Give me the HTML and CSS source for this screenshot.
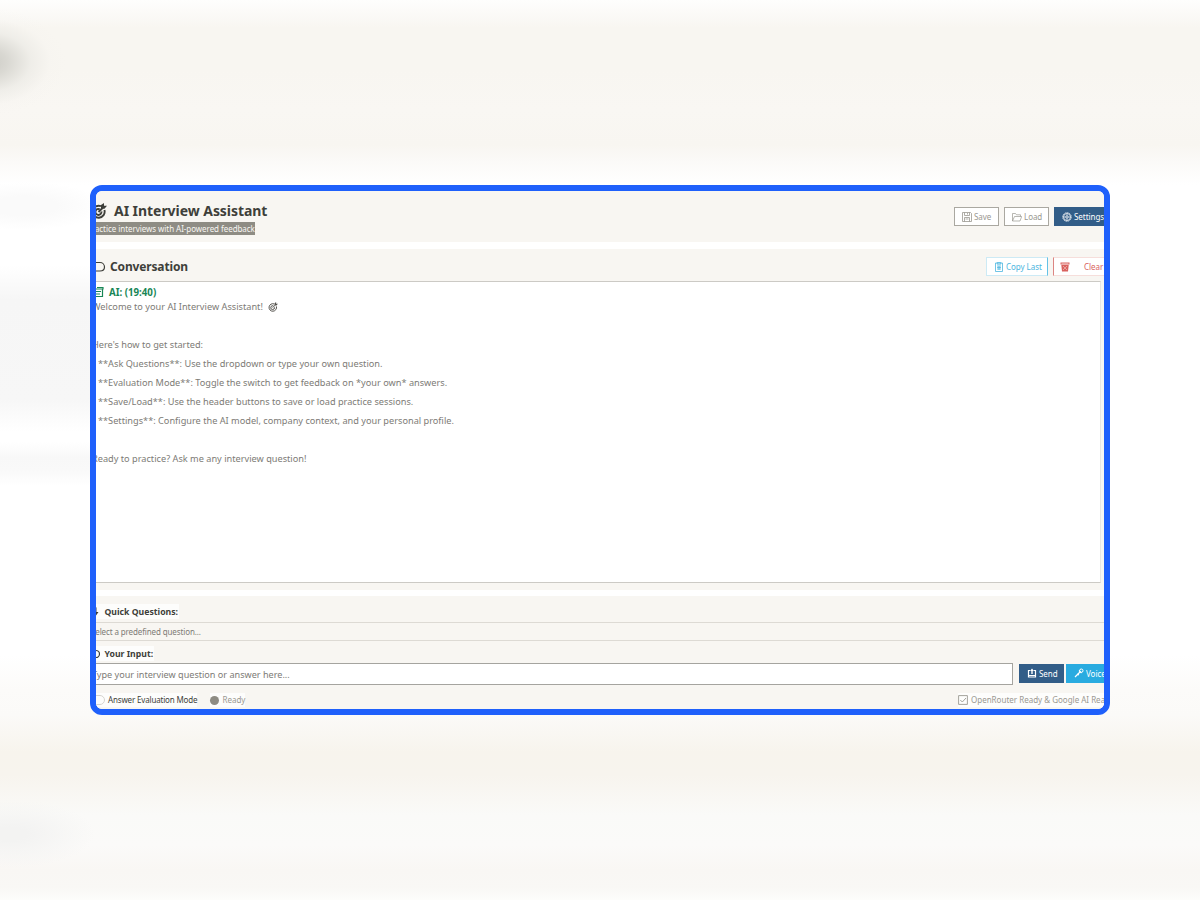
FILE: index.html
```html
<!DOCTYPE html>
<html lang="en">
<head>
    <meta charset="UTF-8">
    <meta name="viewport" content="width=device-width, initial-scale=1.0">
    <title>AI Interview Assistant</title>
    <link rel="stylesheet" href="styles.css">
</head>
<body>
    <div class="window">
        <div class="app">

            <header class="header">
                <div class="brand">
                    <h1>
                        <svg class="icon-title" viewBox="0 0 16 16"><g fill="none" stroke="currentColor" stroke-width="1.9"><path d="M10 3.200A6 6 0 1 0 13.400 7"/><path d="M8.800 6.300A3 3 0 1 0 10.400 8.500"/><path d="M7.500 9L13 3.500"/></g><path d="M10 5.500V2L13 0v2.800H16L13.500 5.800z" fill="currentColor"/></svg>
                        <span>AI Interview Assistant</span>
                    </h1>
                    <p><span class="subtitle">Practice interviews with AI-powered feedback</span></p>
                </div>
                <div class="header-buttons">
                    <button class="btn btn-save">
                        <svg viewBox="0 0 10 10"><path d="M.5.500h8l1 1v8h-9zM2.500.500v3h5v-3M2.500 9.500v-4h5v4M5.500 1v1.500M3.500 7h3" fill="none" stroke="currentColor" stroke-width=".8"/></svg>
                        <span>Save</span>
                    </button>
                    <button class="btn btn-load">
                        <svg viewBox="0 0 10 10"><path d="M.5 9V1.500h3l1 1.300h4V4.500M.5 9l2-4.500h7.200L8 9z" fill="none" stroke="currentColor" stroke-width=".7"/></svg>
                        <span>Load</span>
                    </button>
                    <button class="btn btn-settings">
                        <svg viewBox="0 0 10 10"><g fill="none" stroke="currentColor"><circle cx="5" cy="5" r="4.300" stroke-width=".7" stroke-dasharray="1.700 .5"/><circle cx="5" cy="5" r="3.500" stroke-width=".8"/><circle cx="5" cy="5" r="1.200" stroke-width=".8"/><path d="M5 1.700v2.100M5 6.200v2.100M1.700 5h2.100M6.200 5h2.100" stroke-width=".6"/></g></svg>
                        <span>Settings</span>
                    </button>
                </div>
            </header>

            <section class="conversation">
                <div class="section-head">
                    <h2>
                        <svg class="icon-bubble" viewBox="0 0 16 12"><path d="M5 1.500h5C12.500 1.500 14.500 3.500 14.500 6S12.500 10 10 10H5" fill="none" stroke="currentColor" stroke-width="1.200"/></svg>
                        <span>Conversation</span>
                    </h2>
                    <div class="section-buttons">
                        <button class="btn btn-copy">
                            <svg viewBox="0 0 10 10"><path d="M1.500 1h7v8.500h-7zM3.200.600h3.600v1.600H3.200zM3 4h4M3 5.500h4M3 7h4M5 4v4" fill="none" stroke="currentColor" stroke-width=".8"/></svg>
                            <span>Copy Last</span>
                        </button>
                        <button class="btn btn-clear">
                            <svg viewBox="0 0 10 10"><path d="M.5.500h9v2h-9zM1.300 3h7.400L8 9.500H2z" fill="currentColor"/><path d="M3 4l4 4M7 4L3 8M1.500 1.500h7" stroke="#fff" stroke-width=".4"/></svg>
                            <span>Clear</span>
                        </button>
                    </div>
                </div>
                <div class="chat">
                    <div class="sender">
                        <svg viewBox="0 0 12 10"><path d="M1 2h9.500v7.500H1zM2.500 4.500h6.500M4 7h4M5 .500h6v2" fill="none" stroke="currentColor" stroke-width="1.200"/></svg>
                        <span>AI: (19:40)</span>
                    </div>
                    <div class="line welcome">
                        <span>Welcome to your AI Interview Assistant!</span>
                        <svg viewBox="0 0 16 16"><g fill="none" stroke="currentColor" stroke-width="1.600"><path d="M10 3.200A6 6 0 1 0 13.400 7"/><path d="M8.800 6.300A3 3 0 1 0 10.400 8.500"/><path d="M7.500 9L13 3.500"/></g><path d="M10.500 5V2L13 0v2.800H16L13.500 5.500z" fill="currentColor"/></svg>
                    </div>
                    <div class="line"></div>
                    <div class="line">Here's how to get started:</div>
                    <div class="line item">**Ask Questions**: Use the dropdown or type your own question.</div>
                    <div class="line item">**Evaluation Mode**: Toggle the switch to get feedback on *your own* answers.</div>
                    <div class="line item">**Save/Load**: Use the header buttons to save or load practice sessions.</div>
                    <div class="line item">**Settings**: Configure the AI model, company context, and your personal profile.</div>
                    <div class="line"></div>
                    <div class="line">Ready to practice? Ask me any interview question!</div>
                </div>
            </section>

            <section class="composer">
                <div class="label label-quick">
                    <svg viewBox="0 0 8 10"><path d="M5.500 0L2 5.500h2.500L4 10l3.500-5H5.500z" fill="currentColor"/></svg>
                    <span>Quick Questions:</span>
                </div>
                <div class="select">Select a predefined question...</div>
                <div class="label label-input">
                    <svg viewBox="0 0 8 10"><path d="M3 1.500h2C6.800 1.500 8.500 3 8.500 5S6.800 8.500 5 8.500H3" fill="none" stroke="currentColor" stroke-width="1.200"/></svg>
                    <span>Your Input:</span>
                </div>
                <div class="input-row">
                    <div class="input">Type your interview question or answer here...</div>
                    <button class="btn btn-send">
                        <svg viewBox="0 0 10 10"><path d="M3 2.500H1.500V9h7V2.500H7M2 7.500h6" fill="none" stroke="currentColor" stroke-width="1.200"/><path d="M5 .500l2 2.500H5.700V6H4.300V3H3z" fill="currentColor"/></svg>
                        <span>Send</span>
                    </button>
                    <button class="btn btn-voice">
                        <svg viewBox="0 0 10 10"><path d="M1 9l5-5M5 2.500L7.500 5M3 6l2 1" fill="none" stroke="currentColor" stroke-width="1.200"/><circle cx="7.300" cy="2.700" r="1.700" fill="none" stroke="currentColor"/></svg>
                        <span>Voice</span>
                    </button>
                </div>
                <div class="status-row">
                    <div class="mode"><i class="toggle"></i><span>Answer Evaluation Mode</span></div>
                    <div class="ready-state"><i class="dot"></i><span>Ready</span></div>
                    <div class="api-state">
                        <svg viewBox="0 0 10 10"><path d="M.600.600h8.800v8.800H.600zM2.300 5l2 2L8 3" fill="none" stroke="currentColor" stroke-width=".9"/></svg>
                        <span>OpenRouter Ready &amp; Google AI Ready</span>
                    </div>
                </div>
            </section>

        </div>
    </div>
</body>
</html>
```
FILE: styles.css
```css
body {
    margin: 0;
    height: 900px;
    overflow: hidden;
    box-sizing: border-box;
    padding: 185px 90px;
    font-family: "Noto Sans", "Open Sans", sans-serif;
    color: #7d7b76;
    background:
        radial-gradient(ellipse 78px 54px at -12px 62px, #cccbc5 0%, rgba(212, 211, 205, .85) 25%, rgba(230, 229, 224, .5) 55%, rgba(244, 242, 238, .2) 80%, transparent 100%),
        radial-gradient(ellipse 80px 24px at 25px 206px, #fafafa 40%, transparent 100%),
        linear-gradient(transparent 265px, #f6f6f6 300px, #f7f7f7 400px, transparent 432px) 0 0 / 92px 900px no-repeat,
        linear-gradient(transparent 442px, #f8f8f8 458px, #f9f9f9 470px, transparent 486px) 0 0 / 92px 900px no-repeat,
        radial-gradient(ellipse 85px 34px at 10px 834px, #f3f3f2 20%, transparent 100%),
        linear-gradient(#fefefd 0, #fcfbf9 10px, #f8f6f1 28px, #f8f6f1 70px, #f9f7f3 110px, #f8f6f1 145px, #fbfaf8 162px, #fff 185px, #fff 655px, #fcfbf9 690px, #fbfaf8 715px, #f7f4ed 752px, #f7f4ee 775px, #fafaf8 815px, #fbfaf9 845px, #f9f7f4 870px, #f9f8f5 888px, #fdfdfb 900px);
}
h1, h2, p {
    margin: 0;
}
svg {
    display: block;
    flex: none;
}
.window {
    box-sizing: border-box;
    width: 1020px;
    height: 530px;
    border: 6px solid #1f60fb;
    border-radius: 12px;
    overflow: hidden;
    background: #fff;
}
/* the app is a little wider than the window, its edges are cut off */
.app {
    margin: 0 -12px;
    white-space: nowrap;
}

.header {
    display: flex;
    justify-content: space-between;
    height: 51px;
    background: #f8f6f2;
}
.brand {
    padding: 10px 0 0 7px;
}
h1 {
    display: flex;
    align-items: center;
    gap: 7px;
    height: 20px;
    font-size: 14px;
    line-height: 20px;
    letter-spacing: -.05px;
    color: #3e3f3a;
}
.icon-title {
    width: 16px;
    height: 16px;
}
.brand p {
    height: 13px;
    margin: 1px 0 0 -4px;
    line-height: 13px;
    font-size: 8px;
    letter-spacing: -.05px;
}
.subtitle {
    display: inline-block;
    height: 13px;
    background: #8e8c84;
    color: #f8f6f2;
}
.header-buttons {
    display: flex;
    gap: 5px;
    padding: 16px 0 0;
}

.btn {
    display: flex;
    align-items: center;
    box-sizing: border-box;
    height: 19px;
    padding: 0 0 0 7px;
    gap: 2px;
    border: 1px solid;
    background: #fff;
    font-family: inherit;
    font-size: 8px;
    letter-spacing: -.05px;
    line-height: 17px;
    white-space: nowrap;
    flex: none;
}
.btn svg {
    width: 10px;
    height: 10px;
}
.btn-save, .btn-load {
    width: 45px;
    border-color: #aaa8a1;
    color: #9a9891;
}
.btn-settings {
    width: 62px;
    border-color: #325d88;
    background: #325d88;
    color: #fff;
}

.conversation {
    height: 341px;
    margin-top: 7px;
    background: #f8f6f2;
}
.section-head {
    display: flex;
    justify-content: space-between;
    height: 32px;
}
h2 {
    display: flex;
    align-items: center;
    gap: 4px;
    height: 20px;
    padding: 8px 0 0 6px;
    font-size: 12px;
    letter-spacing: -.15px;
    line-height: 20px;
    color: #3e3f3a;
}
.icon-bubble {
    width: 16px;
    height: 12px;
}
.section-buttons {
    display: flex;
    gap: 5px;
    padding-top: 8px;
}
.btn-copy {
    width: 62px;
    border-color: #cdeaf5 #65c2e6 #cdeaf5 #cdeaf5;
    color: #4db6e0;
}
.btn-clear {
    width: 63px;
    gap: 14px;
    padding-left: 6px;
    border-color: #f6dedb #d9534f #f6dedb #dc8582;
    color: #d9625e;
}
.chat {
    box-sizing: border-box;
    width: 1017px;
    height: 302px;
    padding: 4px 0 0 7px;
    border: 1px solid #cccac5;
    border-right-color: #e9e6e1;
    background: #fff;
    font-size: 9.2px;
}
.sender {
    display: flex;
    align-items: center;
    gap: 5px;
    height: 12px;
    font-size: 9.7px;
    font-weight: bold;
    color: #188656;
}
.sender svg {
    width: 12px;
    height: 10px;
}
.line {
    height: 19px;
    line-height: 19px;
}
.item {
    padding-left: 6px;
}
.welcome {
    display: flex;
    align-items: center;
    gap: 5px;
    margin-top: -1px;
}
.welcome svg {
    width: 10px;
    height: 10px;
    color: #55534e;
}

.composer {
    height: 113px;
    margin-top: 6px;
    padding-top: 8px;
    box-sizing: border-box;
    background: #f8f6f2;
}
.label {
    display: flex;
    align-items: center;
    box-sizing: border-box;
    width: fit-content;
    height: 15px;
    padding: 0 1px 0 7px;
    gap: 5.5px;
    background: #fdfdfc;
    color: #3e3f3a;
    font-size: 8.7px;
    font-weight: bold;
}
.label svg {
    width: 8px;
    height: 10px;
    overflow: visible;
}
.select {
    box-sizing: border-box;
    height: 19px;
    margin-top: 3px;
    padding-left: 7px;
    border: solid #dddad4;
    border-width: 1px 0;
    font-size: 8px;
    letter-spacing: -.12px;
    line-height: 17px;
}
.label-input {
    margin-top: 5px;
}
.input-row {
    display: flex;
    align-items: center;
    height: 22px;
    margin-top: 2px;
}
.input {
    flex: none;
    box-sizing: border-box;
    width: 929px;
    height: 22px;
    padding-left: 7px;
    border: 1px solid #a5a49f;
    background: #fff;
    font-size: 9.1px;
    line-height: 21px;
}
.btn-send {
    width: 45px;
    margin-left: 6px;
    border-color: #325d88;
    background: #325d88;
    color: #fff;
}
.btn-voice {
    width: 60px;
    margin-left: 2px;
    border-color: #29abe0;
    background: #29abe0;
    color: #fff;
}
.input-row .btn {
    margin-bottom: 2px;
}
.status-row {
    display: flex;
    align-items: center;
    height: 14px;
    margin-top: 8px;
    font-size: 8px;
    line-height: 14px;
}
.status-row > div {
    display: flex;
    align-items: center;
    background: #fdfdfc;
}
.mode {
    gap: 3px;
    color: #3e3f3a;
    letter-spacing: -.16px;
}
.toggle {
    box-sizing: border-box;
    width: 14px;
    height: 10px;
    margin-left: 7px;
    border: 1px solid #d5d3ce;
    border-radius: 5px;
}
.ready-state {
    gap: 3px;
    margin-left: 13px;
    color: #9a9891;
}
.dot {
    width: 9px;
    height: 9px;
    border-radius: 50%;
    background: #8e8c84;
}
.api-state {
    gap: 3px;
    margin-left: auto;
    width: 158px;
    color: #9a9891;
}
.api-state svg {
    width: 10px;
    height: 10px;
}
```
